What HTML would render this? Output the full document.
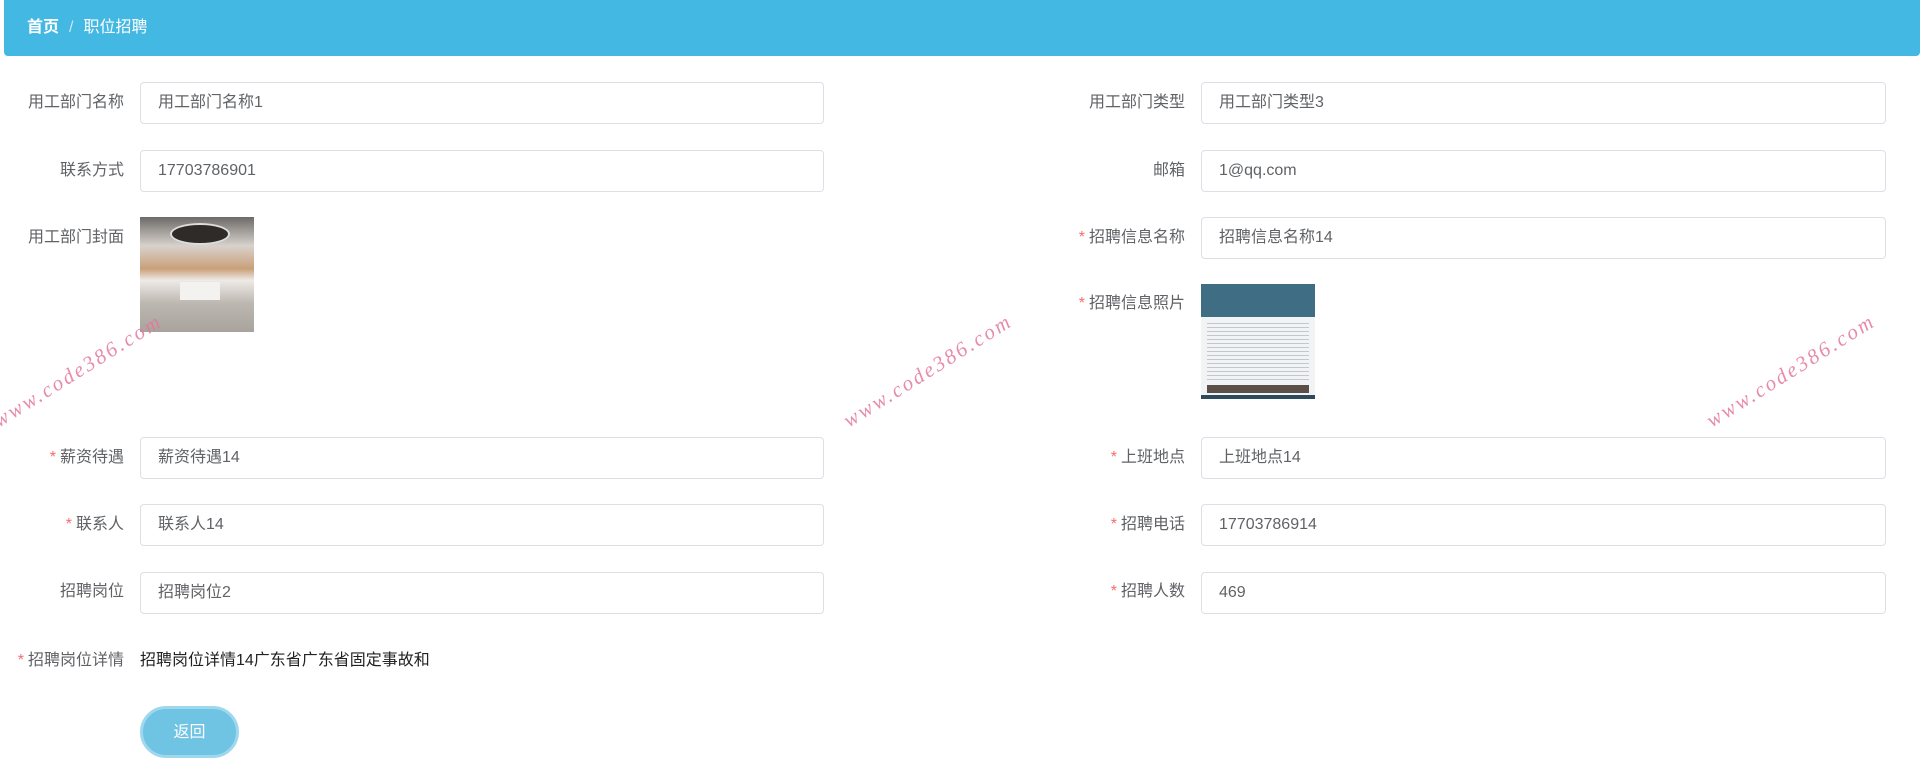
<!DOCTYPE html>
<html><head><meta charset="utf-8"><style>
*{box-sizing:border-box;margin:0;padding:0}
body{width:1920px;height:754px;overflow:hidden;background:#fff;font-family:"Liberation Sans","Noto Sans CJK SC",sans-serif;position:relative}
.hdr{position:absolute;left:4px;top:0;width:1916px;height:56px;background:#43b8e3;border-radius:0 0 4px 4px;color:#fff;font-size:16px;line-height:56px;padding-left:23px}
.hdr b{font-weight:bold}.hdr .sep{color:#c8e8f6;margin:0 10px}
.lbl{position:absolute;font-size:16px;color:#606266;text-align:right;line-height:20px}
.lbl i{color:#f56c6c;font-style:normal;margin-right:4px}
.inp{position:absolute;height:42px;border:1px solid #dcdfe6;border-radius:4px;font-size:16px;color:#606266;line-height:40px;padding-left:17px}
.L{left:140px;width:684px}.R{left:1201px;width:685px}
.ll{right:1796px}.rl{right:735px}
.wm{position:absolute;color:#e3779d;font-family:"Liberation Serif",serif;font-style:italic;font-size:21px;letter-spacing:2.5px;transform:rotate(-32deg);transform-origin:0 100%;white-space:nowrap;opacity:.85}
</style></head><body>
<div class="hdr"><b>首页</b><span class="sep">/</span><span>职位招聘</span></div>

<div class="lbl ll" style="top:93px">用工部门名称</div><div class="inp L" style="top:82px">用工部门名称1</div>
<div class="lbl rl" style="top:93px">用工部门类型</div><div class="inp R" style="top:82px">用工部门类型3</div>

<div class="lbl ll" style="top:161px">联系方式</div><div class="inp L" style="top:150px">17703786901</div>
<div class="lbl rl" style="top:161px">邮箱</div><div class="inp R" style="top:150px">1@qq.com</div>

<div class="lbl ll" style="top:228px">用工部门封面</div>
<div style="position:absolute;left:140px;top:217px;width:114px;height:115px;background:linear-gradient(180deg,#6d6a68 0%,#d8d2cc 25%,#c9a07a 45%,#eeeae6 55%,#bdb7b1 75%,#a9a39d 100%)"><div style="position:absolute;left:30px;top:6px;width:60px;height:22px;border-radius:50%;background:#2f2b29;border:2px solid #ddd"></div><div style="position:absolute;left:40px;top:65px;width:40px;height:18px;background:#f4f2f0"></div></div>

<div class="lbl rl" style="top:228px"><i>*</i>招聘信息名称</div><div class="inp R" style="top:217px">招聘信息名称14</div>
<div class="lbl rl" style="top:294px"><i>*</i>招聘信息照片</div>
<div style="position:absolute;left:1201px;top:284px;width:114px;height:115px;background:#f2f3f5"><div style="height:33px;background:#3f6e84"></div><div style="margin:6px 6px;height:60px;background:repeating-linear-gradient(180deg,#c2c8d0 0 1px,#f2f3f5 1px 4px)"></div><div style="position:absolute;left:6px;bottom:6px;width:102px;height:8px;background:#5a5048"></div><div style="position:absolute;left:0;bottom:0;width:114px;height:4px;background:#2e4b5e"></div></div>

<div class="lbl ll" style="top:448px"><i>*</i>薪资待遇</div><div class="inp L" style="top:437px">薪资待遇14</div>
<div class="lbl rl" style="top:448px"><i>*</i>上班地点</div><div class="inp R" style="top:437px">上班地点14</div>

<div class="lbl ll" style="top:515px"><i>*</i>联系人</div><div class="inp L" style="top:504px">联系人14</div>
<div class="lbl rl" style="top:515px"><i>*</i>招聘电话</div><div class="inp R" style="top:504px">17703786914</div>

<div class="lbl ll" style="top:582px">招聘岗位</div><div class="inp L" style="top:572px">招聘岗位2</div>
<div class="lbl rl" style="top:582px"><i>*</i>招聘人数</div><div class="inp R" style="top:572px">469</div>

<div class="lbl ll" style="top:651px"><i>*</i>招聘岗位详情</div>
<div style="position:absolute;left:140px;top:651px;font-size:16px;line-height:20px;color:#222">招聘岗位详情14广东省广东省固定事故和</div>

<div style="position:absolute;left:140px;top:706px;width:99px;height:52px;border-radius:26px;background:#6fc3e3;border:3px solid #9fd8ee;color:#fff;font-size:16px;text-align:center;line-height:48px">返回</div>

<div class="wm" style="left:2px;top:408px">www.code386.com</div>
<div class="wm" style="left:852px;top:408px">www.code386.com</div>
<div class="wm" style="left:1715px;top:408px">www.code386.com</div>
</body></html>
